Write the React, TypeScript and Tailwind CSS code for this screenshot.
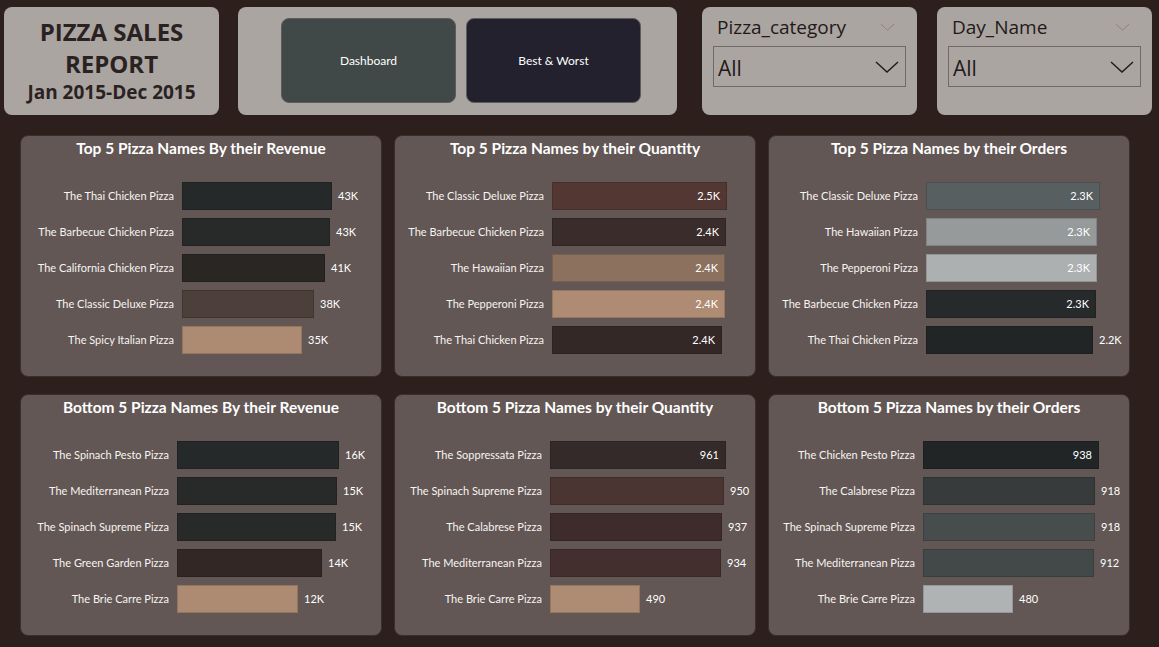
import React from 'react';

interface Row {
  name: string;
  value: string;
  w: number;
  color: string;
  inside?: boolean;
}

interface ChartCardProps {
  title: string;
  barStart: number;
  rows: Row[];
}

const charts: ChartCardProps[] = [
  {
    title: 'Top 5 Pizza Names By their Revenue',
    barStart: 161,
    rows: [
      { name: 'The Thai Chicken Pizza', value: '43K', w: 150, color: '#25292a' },
      { name: 'The Barbecue Chicken Pizza', value: '43K', w: 148, color: '#272a28' },
      { name: 'The California Chicken Pizza', value: '41K', w: 143, color: '#292624' },
      { name: 'The Classic Deluxe Pizza', value: '38K', w: 132, color: '#4d3f39' },
      { name: 'The Spicy Italian Pizza', value: '35K', w: 120, color: '#ad8b72' },
    ],
  },
  {
    title: 'Top 5 Pizza Names by their Quantity',
    barStart: 157,
    rows: [
      { name: 'The Classic Deluxe Pizza', value: '2.5K', w: 175, color: '#523733', inside: true },
      { name: 'The Barbecue Chicken Pizza', value: '2.4K', w: 174, color: '#3a2c2b', inside: true },
      { name: 'The Hawaiian Pizza', value: '2.4K', w: 173, color: '#8c715f', inside: true },
      { name: 'The Pepperoni Pizza', value: '2.4K', w: 173, color: '#ae8c73', inside: true },
      { name: 'The Thai Chicken Pizza', value: '2.4K', w: 170, color: '#342827', inside: true },
    ],
  },
  {
    title: 'Top 5 Pizza Names by their Orders',
    barStart: 157,
    rows: [
      { name: 'The Classic Deluxe Pizza', value: '2.3K', w: 174, color: '#575f60', inside: true },
      { name: 'The Hawaiian Pizza', value: '2.3K', w: 171, color: '#979a9a', inside: true },
      { name: 'The Pepperoni Pizza', value: '2.3K', w: 171, color: '#adb0b0', inside: true },
      { name: 'The Barbecue Chicken Pizza', value: '2.3K', w: 170, color: '#262a2a', inside: true },
      { name: 'The Thai Chicken Pizza', value: '2.2K', w: 167, color: '#212526' },
    ],
  },
  {
    title: 'Bottom 5 Pizza Names By their Revenue',
    barStart: 156,
    rows: [
      { name: 'The Spinach Pesto Pizza', value: '16K', w: 162, color: '#25292a' },
      { name: 'The Mediterranean Pizza', value: '15K', w: 160, color: '#272a28' },
      { name: 'The Spinach Supreme Pizza', value: '15K', w: 159, color: '#272a28' },
      { name: 'The Green Garden Pizza', value: '14K', w: 145, color: '#332726' },
      { name: 'The Brie Carre Pizza', value: '12K', w: 121, color: '#ad8b72' },
    ],
  },
  {
    title: 'Bottom 5 Pizza Names by their Quantity',
    barStart: 155,
    rows: [
      { name: 'The Soppressata Pizza', value: '961', w: 176, color: '#342a29', inside: true },
      { name: 'The Spinach Supreme Pizza', value: '950', w: 174, color: '#4a3532' },
      { name: 'The Calabrese Pizza', value: '937', w: 172, color: '#3d2c2b' },
      { name: 'The Mediterranean Pizza', value: '934', w: 171, color: '#432f2d' },
      { name: 'The Brie Carre Pizza', value: '490', w: 90, color: '#ae8c73' },
    ],
  },
  {
    title: 'Bottom 5 Pizza Names by their Orders',
    barStart: 154,
    rows: [
      { name: 'The Chicken Pesto Pizza', value: '938', w: 176, color: '#212526', inside: true },
      { name: 'The Calabrese Pizza', value: '918', w: 172, color: '#373b3b' },
      { name: 'The Spinach Supreme Pizza', value: '918', w: 172, color: '#474c4d' },
      { name: 'The Mediterranean Pizza', value: '912', w: 171, color: '#434848' },
      { name: 'The Brie Carre Pizza', value: '480', w: 90, color: '#b0b3b3' },
    ],
  },
];

const ChartCard: React.FC<ChartCardProps> = ({ title, barStart, rows }) => {
  return (
    <div className="w-[362px] h-[242px] bg-[#625754] border border-[#3a2f2c] rounded-lg flex flex-col">
      <h2 className="text-center text-white font-bold text-[15.5px] leading-[16px] mt-[4px] font-['Lato',sans-serif]">{title}</h2>
      <div className="flex flex-col gap-[8px] mt-[26px]">
        {rows.map((r) => (
          <div key={r.name} className="flex items-center h-[28px]">
            <div
              className="text-right text-[11px] text-[#f7f4f2] pr-[8px] whitespace-nowrap font-['Lato',sans-serif]"
              style={{ width: barStart }}
            >
              {r.name}
            </div>
            <div
              className="h-[28px] border border-black/15 flex items-center justify-end pr-[6px]"
              style={{ width: r.w, backgroundColor: r.color }}
            >
              {r.inside && <span className="text-[11px] text-white font-['Lato',sans-serif]">{r.value}</span>}
            </div>
            {!r.inside && <span className="ml-[6px] text-[11px] text-white font-['Lato',sans-serif]">{r.value}</span>}
          </div>
        ))}
      </div>
    </div>
  );
};

const Chevron: React.FC<{ className: string }> = ({ className }) => (
  <svg className={className} viewBox="0 0 24 12" fill="none" stroke="currentColor" strokeWidth="1.4">
    <path d="M1 1 L12 11 L23 1" />
  </svg>
);

const Slicer: React.FC<{ label: string }> = ({ label }) => (
  <div className="w-[215px] h-[108px] bg-[#aba5a2] rounded-lg relative px-[11px] pt-[7px] font-['Open_Sans',sans-serif]">
    <div className="text-[19px] leading-[26px] text-[#1f1a19] pl-[4px]">{label}</div>
    <Chevron className="absolute top-[16px] right-[22px] w-[15px] h-[8px] text-[#8a7d77]" />
    <div className="mt-[6px] w-[193px] h-[41px] border border-[#6f6a67] flex items-center justify-between pl-[4px] pr-[6px]">
      <span className="text-[21px] leading-[28px] mt-[3px] text-[#1f1a19]">All</span>
      <Chevron className="w-[24px] h-[12px] text-[#1f1a19]" />
    </div>
  </div>
);

export default function App() {
  return (
    <div className="w-[1159px] h-[647px] bg-[#2d1f1c] overflow-hidden">
      <div className="flex pt-[7px] pl-[4px]">
        <div className="w-[215px] h-[108px] bg-[#aba5a2] rounded-lg flex flex-col items-center pt-[9px] text-[#2a2221] font-['Open_Sans',sans-serif] font-bold">
          <div className="text-[24px] leading-[32px]">PIZZA SALES</div>
          <div className="text-[24px] leading-[32px]">REPORT</div>
          <div className="text-[19px] leading-[24px]">Jan 2015-Dec 2015</div>
        </div>
        <div className="ml-[19px] w-[439px] h-[108px] bg-[#aba5a2] rounded-lg flex gap-[10px] pl-[43px] pt-[11px]">
          <button className="w-[175px] h-[85px] bg-[#404848] border border-[#5c5c5c] rounded-lg text-white text-[12px] font-['Lato',sans-serif]">Dashboard</button>
          <button className="w-[175px] h-[85px] bg-[#23212e] border border-[#5c5c5c] rounded-lg text-white text-[12px] font-['Lato',sans-serif]">Best &amp; Worst</button>
        </div>
        <div className="ml-[25px]">
          <Slicer label="Pizza_category" />
        </div>
        <div className="ml-[20px]">
          <Slicer label="Day_Name" />
        </div>
      </div>
      <div className="grid grid-cols-[362px_362px_362px] gap-x-[12px] gap-y-[17px] mt-[20px] ml-[20px]">
        {charts.map((c) => (
          <ChartCard key={c.title} {...c} />
        ))}
      </div>
    </div>
  );
}
